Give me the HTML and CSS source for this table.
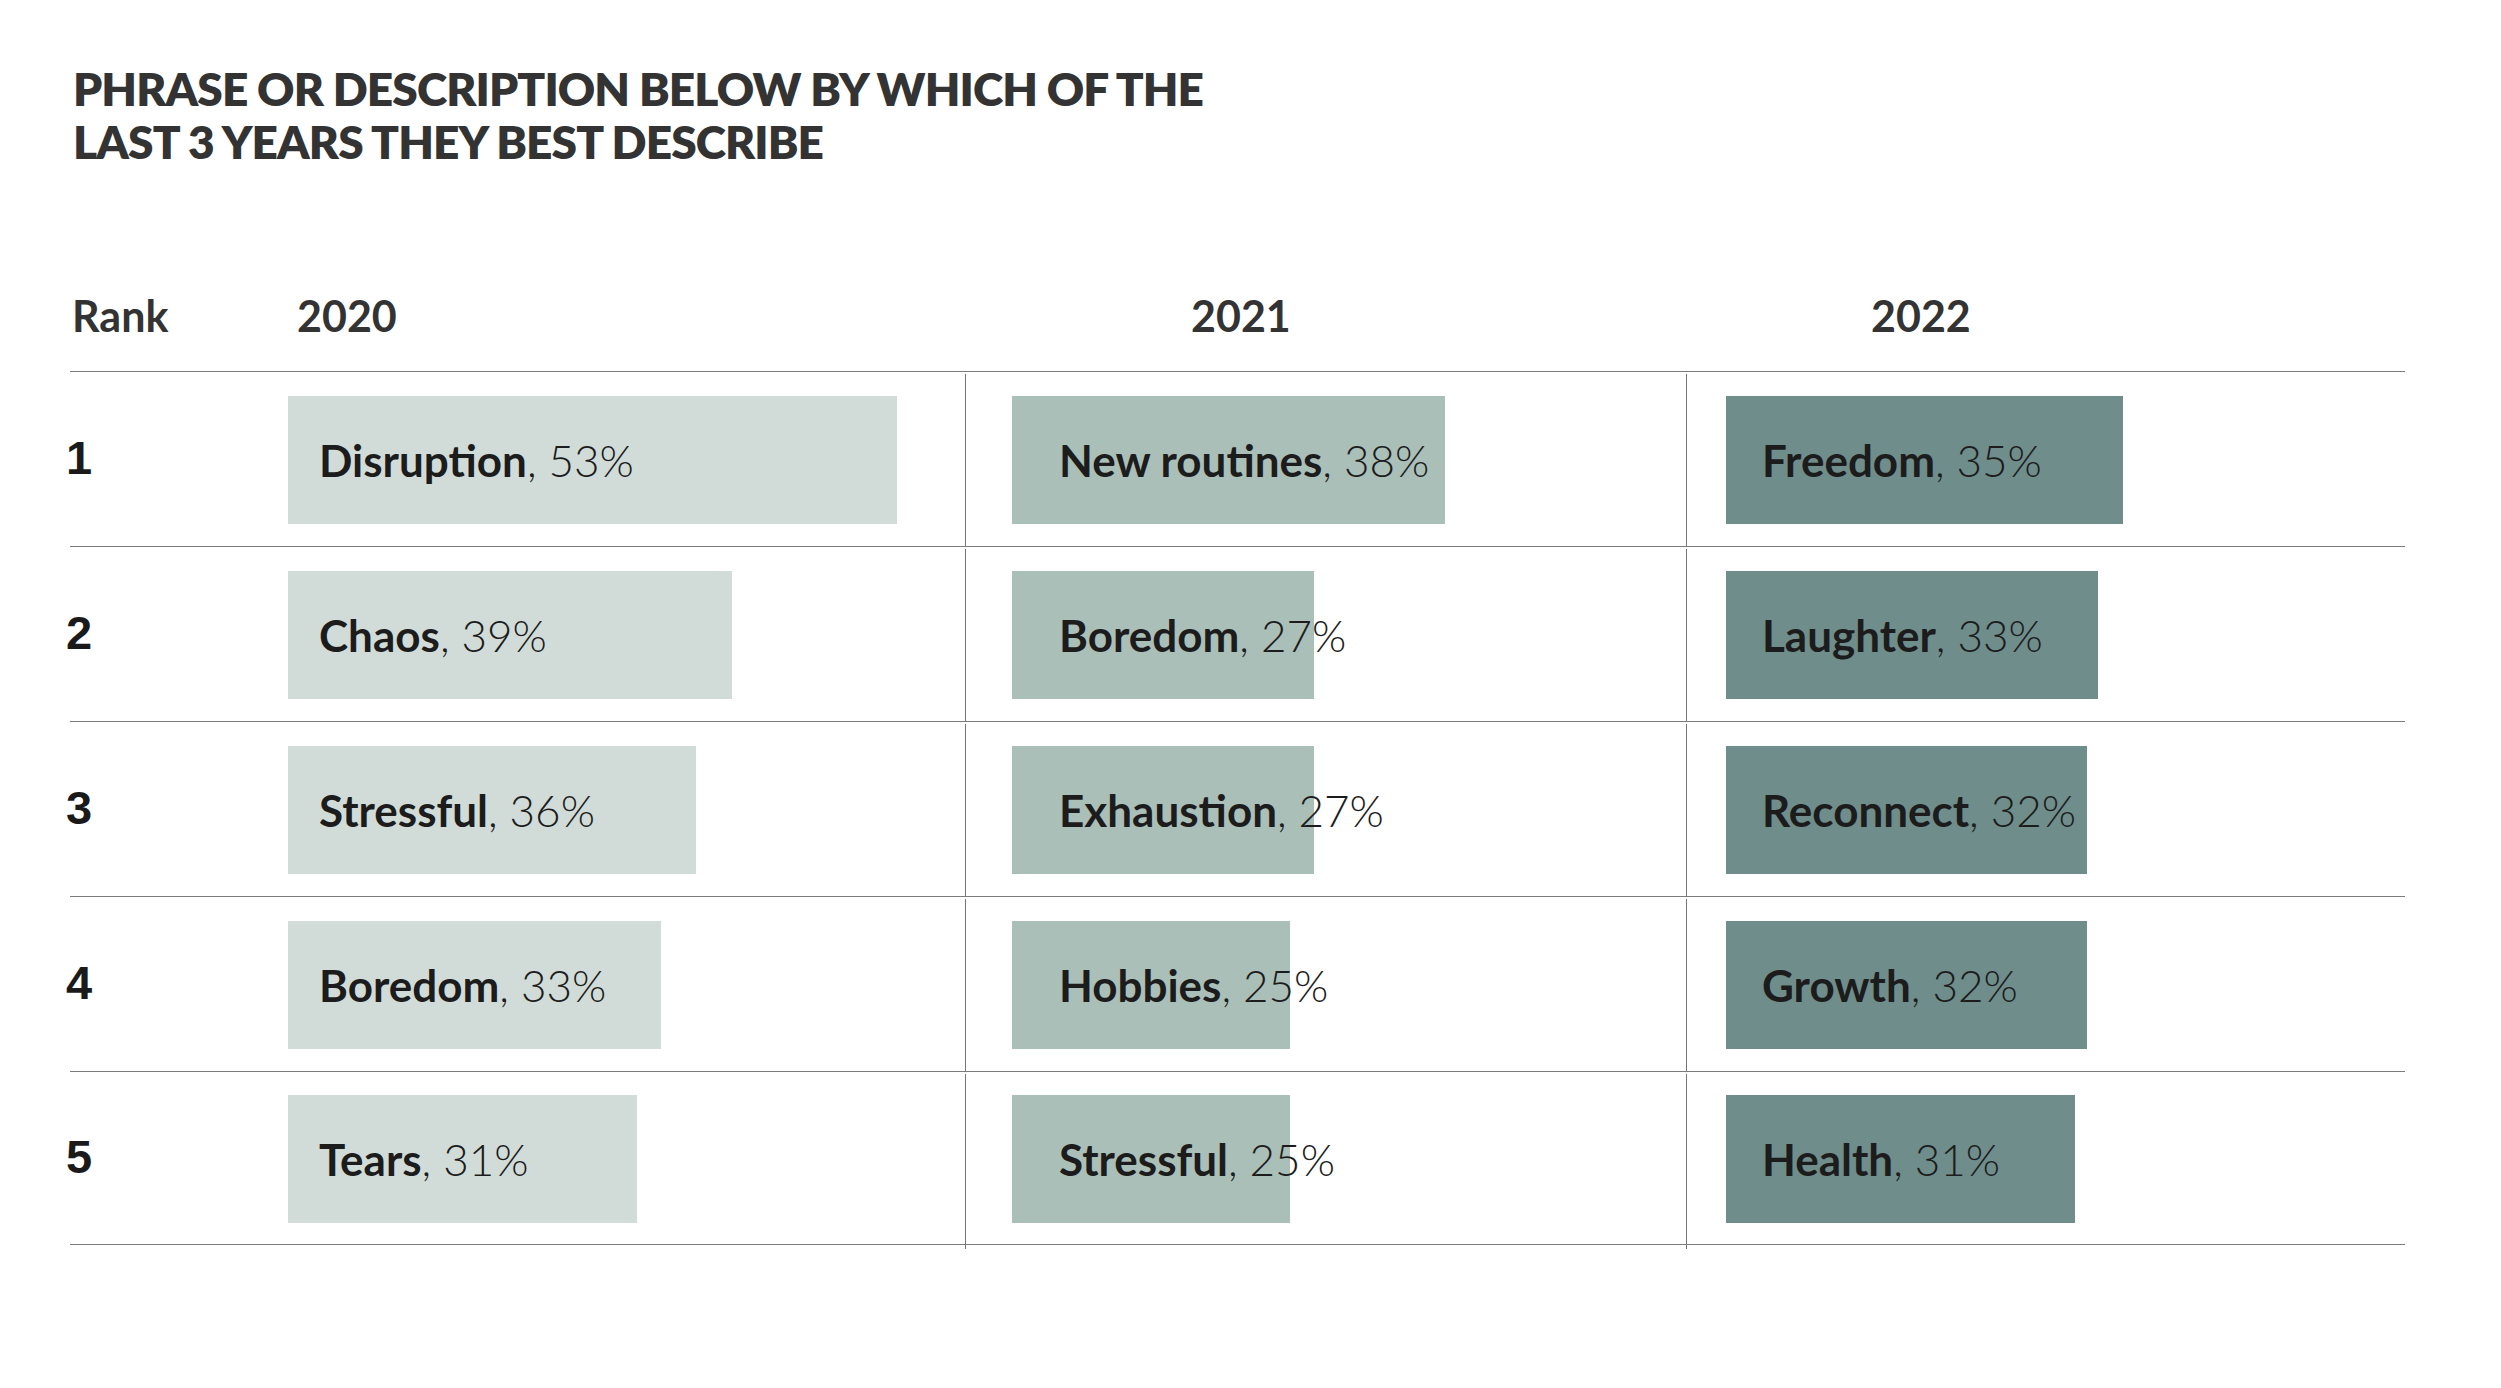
FILE: index.html
```html
<!DOCTYPE html>
<html lang="en">
<head>
<meta charset="utf-8">
<title>Phrase or description by year</title>
<link rel="stylesheet" href="styles.css">
</head>
<body>
<main class="page">
  <h1 class="title">PHRASE OR DESCRIPTION BELOW BY WHICH OF THE<br>LAST 3 YEARS THEY BEST DESCRIBE</h1>
  <div class="table">
    <div class="head">
      <div class="h-rank">Rank</div>
      <div class="h-year y1">2020</div>
      <div class="h-year y2">2021</div>
      <div class="h-year y3">2022</div>
    </div>

    <div class="row">
      <div class="rank">1</div>
      <div class="cell c1"><div class="bar" style="width:609px"><b>Disruption</b>, 53%</div></div>
      <div class="cell c2"><div class="bar" style="width:433px"><b>New routines</b>, 38%</div></div>
      <div class="cell c3"><div class="bar" style="width:397px"><b>Freedom</b>, 35%</div></div>
    </div>
    <div class="row">
      <div class="rank">2</div>
      <div class="cell c1"><div class="bar" style="width:444px"><b>Chaos</b>, 39%</div></div>
      <div class="cell c2"><div class="bar" style="width:302px"><b>Boredom</b>, 27%</div></div>
      <div class="cell c3"><div class="bar" style="width:372px"><b>Laughter</b>, 33%</div></div>
    </div>
    <div class="row">
      <div class="rank">3</div>
      <div class="cell c1"><div class="bar" style="width:408px"><b>Stressful</b>, 36%</div></div>
      <div class="cell c2"><div class="bar" style="width:302px"><b>Exhaustion</b>, 27%</div></div>
      <div class="cell c3"><div class="bar" style="width:361px"><b>Reconnect</b>, 32%</div></div>
    </div>
    <div class="row">
      <div class="rank">4</div>
      <div class="cell c1"><div class="bar" style="width:373px"><b>Boredom</b>, 33%</div></div>
      <div class="cell c2"><div class="bar" style="width:278px"><b>Hobbies</b>, 25%</div></div>
      <div class="cell c3"><div class="bar" style="width:361px"><b>Growth</b>, 32%</div></div>
    </div>
    <div class="row last">
      <div class="rank">5</div>
      <div class="cell c1"><div class="bar" style="width:349px"><b>Tears</b>, 31%</div></div>
      <div class="cell c2"><div class="bar" style="width:278px"><b>Stressful</b>, 25%</div></div>
      <div class="cell c3"><div class="bar" style="width:349px"><b>Health</b>, 31%</div></div>
    </div>
    <div class="tail">
      <div></div><div></div><div class="cell"></div><div class="cell"></div>
    </div>
  </div>
</main>
</body>
</html>
```

FILE: styles.css
```css
* { box-sizing: border-box; }

html, body {
  margin: 0;
  padding: 0;
  background: #ffffff;
}

body {
  font-family: "Lato", "Liberation Sans", sans-serif;
  color: #1c1c1c;
}

.page {
  width: 2501px;
  height: 1388px;
  padding: 0 0 0 70px;
}

.title {
  margin: 62px 0 0 3px;
  font-size: 46px;
  line-height: 53px;
  font-weight: 800;
  color: #333333;
  letter-spacing: -0.9px;
}

.table {
  width: 2335px;
  margin-top: 126px;
}

.head,
.row,
.tail {
  display: grid;
  grid-template-columns: 218px 677px 721px 719px;
}

.head {
  height: 77px;
  font-size: 43px;
  line-height: 43px;
  font-weight: 700;
  color: #333333;
}

.h-rank { padding-left: 2px; }
.y1 { padding-left: 9px; }
.y2 { padding-left: 226px; }
.y3 { padding-left: 185px; }

.row {
  height: 175px;
  border-top: 1.5px solid #7c7c7c;
  align-items: center;
  padding-top: 2px;
}

.row.last {
  height: 174px;
  border-bottom: 1.5px solid #7c7c7c;
}

.rank {
  font-family: "Liberation Sans", Arial, sans-serif;
  font-weight: 700;
  font-size: 47px;
  color: #1a1a1a;
  margin-left: -4px;
  margin-top: -6px;
}

.cell {
  height: 100%;
  display: flex;
  align-items: center;
}

.c2, .c3, .tail .cell {
  border-left: 1px solid #777777;
}

.c2 { padding-left: 46px; }
.c3 { padding-left: 39px; }

.bar {
  height: 128px;
  display: flex;
  align-items: center;
  white-space: nowrap;
  font-size: 44px;
  font-weight: 300;
  color: #1c1c1c;
}

.bar b { font-weight: 700; }

.c1 .bar { background: #d1dcd9; padding-left: 31px; }
.c2 .bar { background: #abbfb9; padding-left: 47px; }
.c3 .bar { background: #6f8d8b; padding-left: 36px; }

.tail { height: 4px; }
```
